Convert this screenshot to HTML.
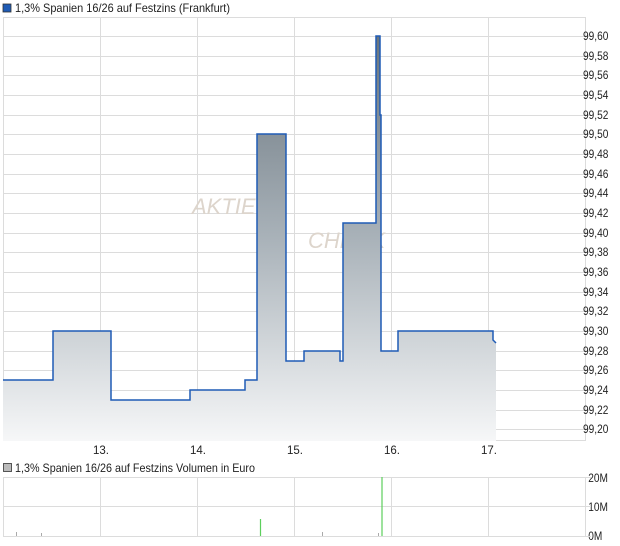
<!DOCTYPE html>
<html><head><meta charset="utf-8"><style>
html,body{margin:0;padding:0;background:#fff;width:620px;height:546px;overflow:hidden}
svg{display:block;font-family:"Liberation Sans",sans-serif}
</style></head><body>
<svg width="620" height="546" viewBox="0 0 620 546" xmlns="http://www.w3.org/2000/svg">
<defs>
<linearGradient id="g" x1="0" y1="36" x2="0" y2="441" gradientUnits="userSpaceOnUse">
<stop offset="0" stop-color="#68747d"/>
<stop offset="0.5" stop-color="#a9b2b9"/>
<stop offset="1" stop-color="#f6f7f8"/>
</linearGradient>
</defs>
<rect x="3" y="4" width="8" height="8" fill="#1f5bb5" stroke="#333" stroke-width="0.8"/>
<text x="15" y="12" font-size="12" fill="#222" textLength="215" lengthAdjust="spacingAndGlyphs">1,3% Spanien 16/26 auf Festzins (Frankfurt)</text>
<g stroke="#dcdcdc" stroke-width="1" fill="none">
<rect x="3.5" y="17.5" width="582" height="423"/>
<path d="M100.5 17V441M197.5 17V441M294.5 17V441M391.5 17V441M488.5 17V441"/>
<path d="M3 36.5H591M3 56.5H591M3 75.5H591M3 95.5H591M3 115.5H591M3 134.5H591M3 154.5H591M3 174.5H591M3 193.5H591M3 213.5H591M3 233.5H591M3 252.5H591M3 272.5H591M3 292.5H591M3 311.5H591M3 331.5H591M3 351.5H591M3 370.5H591M3 390.5H591M3 410.5H591M3 429.5H591"/>
</g>
<g font-style="italic" fill="#ddd5cc">
<text x="192" y="214" font-size="22">AKTIE</text>
<text x="308" y="248" font-size="22">CHECK</text>
</g>
<path d="M3 380H53V331H111V400H190V390H245V380H257V134H286V361H304V351H340V361H343V223H376V36H380V115H381V351H398V331H493V340L496 343V441H3Z" fill="url(#g)"/>
<path d="M3 380H53V331H111V400H190V390H245V380H257V134H286V361H304V351H340V361H343V223H376V36H380V115H381V351H398V331H493V340L496 343" fill="none" stroke="#1f5bb5" stroke-width="1.5"/>
<g font-size="11.5" fill="#222">
<g transform="translate(583 0) scale(0.88 1)">
<text x="0" y="40">99,60</text><text x="0" y="60">99,58</text><text x="0" y="79">99,56</text><text x="0" y="99">99,54</text><text x="0" y="119">99,52</text><text x="0" y="138">99,50</text><text x="0" y="158">99,48</text><text x="0" y="178">99,46</text><text x="0" y="197">99,44</text><text x="0" y="217">99,42</text><text x="0" y="237">99,40</text><text x="0" y="256">99,38</text><text x="0" y="276">99,36</text><text x="0" y="296">99,34</text><text x="0" y="315">99,32</text><text x="0" y="335">99,30</text><text x="0" y="355">99,28</text><text x="0" y="374">99,26</text><text x="0" y="394">99,24</text><text x="0" y="414">99,22</text><text x="0" y="433">99,20</text>
<text x="6" y="482">20M</text><text x="6" y="511">10M</text><text x="6" y="540">0M</text>
</g>
<text x="93" y="454">13.</text><text x="190" y="454">14.</text><text x="287" y="454">15.</text><text x="384" y="454">16.</text><text x="481" y="454">17.</text>
<text x="15" y="472" font-size="12" textLength="240" lengthAdjust="spacingAndGlyphs">1,3% Spanien 16/26 auf Festzins Volumen in Euro</text>
</g>
<rect x="3.5" y="463.5" width="8" height="8" fill="#bbb" stroke="#333" stroke-width="0.8"/>
<g stroke="#dcdcdc" fill="none">
<path d="M3 477.5H591M3 506.5H591M3 536.5H591M3.5 477V537M100.5 477V537M197.5 477V537M294.5 477V537M391.5 477V537M488.5 477V537M585.5 477V537"/>
</g>
<g stroke="#aaa"><path d="M16.5 532V536M41.5 533V536M322.5 532V536M378.5 533V536"/></g>
<g stroke="#5ccf5c" stroke-width="1.2"><path d="M260.5 519V536M382 477V536"/></g>
</svg>
</body></html>
